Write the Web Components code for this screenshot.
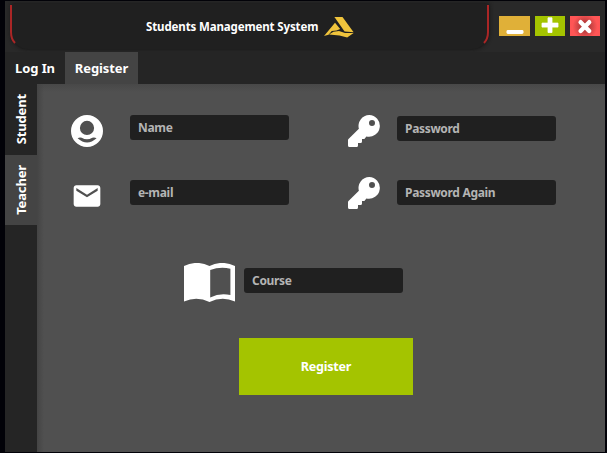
<!DOCTYPE html>
<html lang="en"><head><meta charset="utf-8"><title>Students Management System</title>
<style>
html,body{margin:0;height:100%;overflow:hidden;background:#020208}
body{display:flow-root;font-family:"Noto Sans","Open Sans",sans-serif;font-weight:700;color:#fff}
</style></head><body>
<app-window></app-window>
<script>
const define=(name,html,setup)=>{
  const t=document.createElement('template');t.innerHTML=html;
  customElements.define(name,class extends HTMLElement{
    constructor(){super();this.attachShadow({mode:'open'}).append(t.content.cloneNode(true));}
    connectedCallback(){if(setup)setup(this,this.shadowRoot);}
  });
};
const ICONS={
  user:['0 0 32 32','<path fill-rule="evenodd" d="M16 0a16 16 0 1 1 0 32a16 16 0 0 1 0-32zM16 5.8a7.1 7.1 0 1 0 0 14.2a7.1 7.1 0 0 0 0-14.2zM6.6 23.2Q16 31.6 25.6 23.2Q23.5 22 21.3 22.7Q16 25.8 10.7 22.7Q8.6 22 6.6 23.2z"/>'],
  mail:['0 0 24 24','<path d="M20 4H4c-1.1 0-2 .9-2 2v12c0 1.1.9 2 2 2h16c1.1 0 2-.9 2-2V6c0-1.1-.9-2-2-2zm0 4l-8 5-8-5V6l8 5 8-5v2z"/>'],
  key:['0 0 32 32','<path fill-rule="evenodd" d="M21.2 0A10.9 10.9 0 1 1 18.4 21.5L16.8 23.5Q16.4 24 15.8 24H14V26.5Q14 28 12.5 28H10V30.5Q10 32 8.5 32H1.5Q0 32 0 30.5V25.3Q0 24.6.5 24.1L10.9 13.8A10.9 10.9 0 0 1 21.2 0zM24 5a3 3 0 1 0 0 6a3 3 0 0 0 0-6z"/>'],
  book:['0 0 51 39','<path fill-rule="evenodd" d="M0 3Q13-3.2 25.5 3Q38-3.2 51 3V38.4Q38 33 25.5 39Q13 33 0 38.4zM26.2 7V34.4Q36 29.6 46.4 32V5.7Q36 3.4 26.2 7z"/>'],
  logo:['0 0 30 21','<g fill="#f0c43c"><path d="M10.4 0H18.5L29.6 15.3L20.6 14.6z"/><path d="M0 19L11 5.8L16.2 12L12.5 13.4L7.8 14L4.5 17.8z"/><path d="M5 17.6L9.5 14.8L15 14.1L21 16L29.6 15.9L23.2 20.4L15.5 18.4z"/></g>'],
  min:['0 0 30 20','<rect x="7" y="14" width="17" height="4" rx="1.4"/>'],
  plus:['0 0 30 20','<path d="M13 1.8h4v5.3h6v4h-6v5.4h-4v-5.4H7v-4h6z" stroke="#fff" stroke-linejoin="round" stroke-width=".8"/>'],
  close:['0 0 30 20','<path d="M10.6 6.2l8.6 8.8M19.2 6.2l-8.6 8.8" stroke="#fff" stroke-width="4.4" stroke-linecap="round"/>']
};
define('ui-icon','<style>:host{display:block;flex:none}svg{display:block;width:100%;height:100%;fill:#fff}</style><svg></svg>',(h,r)=>{
  const s=r.querySelector('svg'),i=ICONS[h.getAttribute('name')];s.setAttribute('viewBox',i[0]);s.innerHTML=i[1];});
const insertIcon=(root,name)=>{
  const i=document.createElement('ui-icon');i.setAttribute('name',name);root.querySelector('i').replaceWith(i);};
define('window-button',`<style>:host{display:block;height:20px;background:#e0b038}
:host([kind=plus]){background:#a4c400}
:host([kind=close]){background:radial-gradient(circle at 50% 52%,#a93838 15%,#f55 68%)}
ui-icon{width:100%;height:100%}</style><i></i>`,(h,r)=>insertIcon(r,h.getAttribute('kind')));
define('title-bar',`<style>:host{display:grid;grid-template-columns:6px 478px 1fr;height:51px;background:#292929;overflow:hidden}
.plate{grid-column:2;position:relative;height:45px;margin-top:3px;background:#202020;border-radius:0 0 17px 17px;box-shadow:0 0 4px #111;display:flex;align-items:center;padding-left:135px;box-sizing:border-box}
.edge{position:absolute;left:-1px;top:0;width:480px;height:45px;fill:none;stroke:#aa2626;stroke-width:2}
.title{font-size:11.5px;line-height:16px;width:172px;white-space:nowrap;letter-spacing:-.13px;margin-top:0}
.logo{width:30px;height:21px;margin:2px 0 0 6px}
.buttons{display:grid;grid-template-columns:31px 30px 30px;gap:5px;padding:15px 0 0 10px}
</style><div class="plate"><svg class="edge" viewBox="0 0 480 45"><path d="M1 1V28Q1 35 5 39M478 1V28Q478 35 474 39"/></svg><span class="title">Students Management System</span><ui-icon class="logo" name="logo"></ui-icon></div>
<div class="buttons"><window-button kind="min"></window-button><window-button kind="plus"></window-button><window-button kind="close"></window-button></div>`);
define('nav-tab',`<style>:host{display:flex;align-items:center;justify-content:center;white-space:nowrap;font-size:13px;letter-spacing:-.1px;line-height:18px}
:host([active]){background:#444}
:host([side]){letter-spacing:-.15px}
:host([side]) span{writing-mode:vertical-rl;transform:rotate(180deg)}
</style><span><slot></slot></span>`);
define('text-field',`<style>:host{display:flex;align-items:center;width:159px;height:25px;box-sizing:border-box;padding:0 8px;background:#202020;border-radius:3px;font-size:12px;letter-spacing:-.32px;line-height:16px;color:#b4b4b4;white-space:nowrap}</style><slot></slot>`);
define('form-field',`<style>:host{display:flex;align-items:flex-start}
ui-icon{width:var(--iw,32px);height:var(--ih,32px);margin-right:var(--gap,27px)}
text-field{margin-top:var(--drop,0)}</style><i></i><text-field><slot></slot></text-field>`,(h,r)=>insertIcon(r,h.getAttribute('icon')));
define('action-button',`<style>:host{display:flex;align-items:center;justify-content:center;width:174px;height:57px;background:#a4c400;font-size:12.6px;letter-spacing:-.25px;line-height:18px}</style><span><slot></slot></span>`);
define('register-form',`<style>:host{display:flex;flex-direction:column;background:linear-gradient(90deg,#444,#50505000 7px),linear-gradient(#484848,#505050 8px);padding:31px 0 0}
.grid{display:grid;grid-template-columns:277px 1fr;padding-left:34px;grid-template-rows:62px 62px}
.course{margin:24px 0 0 147px;--iw:51px;--ih:39px;--gap:9px;--drop:5px}
action-button{margin:36px 0 0 202px}
.mail{margin-top:3px}
.first{--gap:17px;--drop:1px}.second{--gap:17px;--drop:3px}
</style><div class="grid">
<form-field icon="user">Name</form-field><form-field class="first" icon="key">Password</form-field>
<form-field class="mail" icon="mail">e-mail</form-field><form-field class="second" icon="key">Password Again</form-field></div>
<form-field class="course" icon="book">Course</form-field><action-button>Register</action-button>`);
define('app-window',`<style>:host{display:grid;box-sizing:border-box;width:600px;height:451px;margin:1px 2px 1px 5px;grid-template-rows:51px 32px 1fr;background:#252525}
nav{display:flex}.login{width:60px}.reg{width:73px}
.main{display:grid;grid-template-columns:32px 1fr}
aside{display:grid;grid-template-rows:71px 70px;background:#252525}
</style><title-bar></title-bar>
<nav><nav-tab class="login">Log In</nav-tab><nav-tab class="reg" active>Register</nav-tab></nav>
<div class="main"><aside><nav-tab side>Student</nav-tab><nav-tab side active>Teacher</nav-tab></aside><register-form></register-form></div>`);
</script></body></html>
